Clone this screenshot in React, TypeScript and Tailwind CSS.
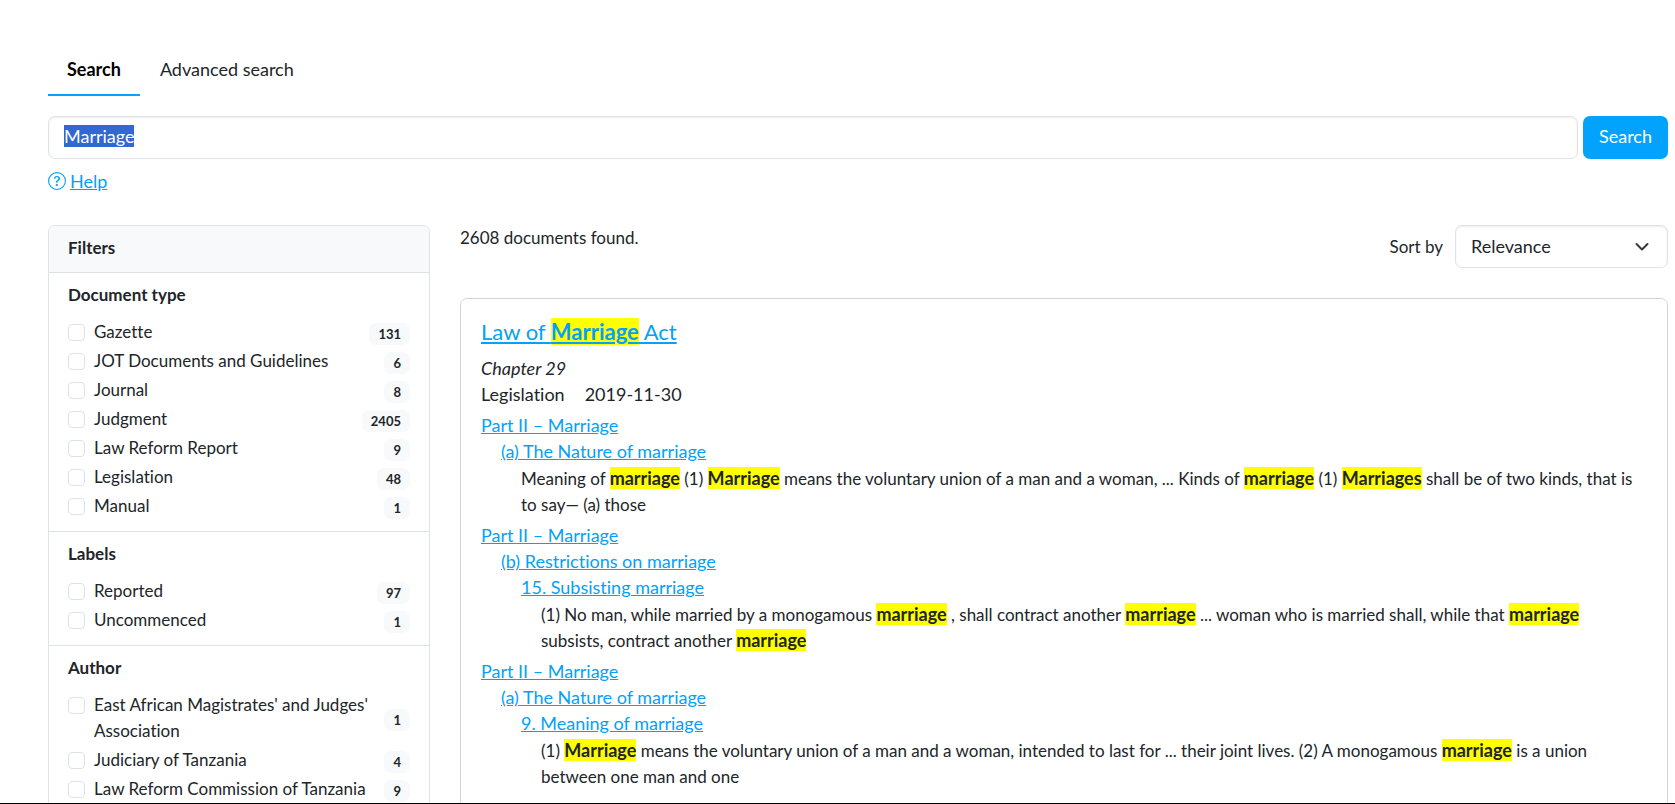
import { useEffect, useRef, type ReactNode } from "react";
import { BsQuestionCircle } from "react-icons/bs";

type Facet = { label: string; count: number };

const facets: { title: string; items: Facet[] }[] = [
  {
    title: "Document type",
    items: [
      { label: "Gazette", count: 131 },
      { label: "JOT Documents and Guidelines", count: 6 },
      { label: "Journal", count: 8 },
      { label: "Judgment", count: 2405 },
      { label: "Law Reform Report", count: 9 },
      { label: "Legislation", count: 48 },
      { label: "Manual", count: 1 },
    ],
  },
  {
    title: "Labels",
    items: [
      { label: "Reported", count: 97 },
      { label: "Uncommenced", count: 1 },
    ],
  },
  {
    title: "Author",
    items: [
      { label: "East African Magistrates' and Judges' Association", count: 1 },
      { label: "Judiciary of Tanzania", count: 4 },
      { label: "Law Reform Commission of Tanzania", count: 9 },
    ],
  },
];

function Mark({ children }: { children: ReactNode }) {
  return <mark className="bg-[#ffff00] leading-none font-bold text-inherit">{children}</mark>;
}

function Link({ children }: { children: ReactNode }) {
  return (
    <a href="#" className="text-[#03a1fc] underline">
      {children}
    </a>
  );
}

function FacetGroup({ title, items }: { title: string; items: Facet[] }) {
  return (
    <section className="border-t border-[#dee2e6] px-[19px] pt-[9px] pb-[9px]">
      <h2 className="mb-[11px] text-[17px] font-bold">{title}</h2>
      <ul>
        {items.map((item) => (
          <li key={item.label} className="flex items-center justify-between pb-[3px]">
            <label className="flex items-start gap-[9px] text-[17px]">
              <input
                type="checkbox"
                className="mt-[5px] size-[17px] shrink-0 appearance-none rounded-[4px] border border-[#dee2e6] bg-white checked:bg-[#03a3fd]"
              />
              <span>{item.label}</span>
            </label>
            <span className="mt-1 rounded-[7px] bg-[#f8f9fb] px-[9px] text-[13px] leading-[22px] font-bold">
              {item.count}
            </span>
          </li>
        ))}
      </ul>
    </section>
  );
}

function Snippet({ children }: { children: ReactNode }) {
  return <p className="pt-[2px] pr-2 text-[17px] [&_mark]:text-[18px]">{children}</p>;
}

function Hit({ path, children }: { path: string[]; children: ReactNode }) {
  return (
    <div className="mt-1">
      <Link>{path[0]}</Link>
      <div className="pl-5">
        <Link>{path[1]}</Link>
        <div className="pl-5">
          {path[2] ? (
            <>
              <Link>{path[2]}</Link>
              <div className="pl-5">
                <Snippet>{children}</Snippet>
              </div>
            </>
          ) : (
            <Snippet>{children}</Snippet>
          )}
        </div>
      </div>
    </div>
  );
}

export default function App() {
  const query = useRef<HTMLInputElement>(null);

  useEffect(() => {
    query.current?.focus();
    query.current?.select();
  }, []);

  return (
    <div className="h-screen overflow-hidden border-b border-black bg-white pt-12 pr-[7px] pl-12 font-['Lato',sans-serif] text-[18px] leading-[26px] text-[#212529] [font-variant-ligatures:no-common-ligatures]">
      <nav className="flex">
        <a href="#" className="border-b-2 border-[#03a3fd] px-[19px] pt-2 pb-3 font-bold text-black">
          Search
        </a>
        <a href="#" className="px-5 pt-2 pb-3">
          Advanced search
        </a>
      </nav>

      <form className="mt-5 flex gap-[5px]" onSubmit={(e) => e.preventDefault()}>
        <input
          ref={query}
          type="text"
          aria-label="Search"
          defaultValue="Marriage"
          className="h-[43px] min-w-0 flex-1 rounded-[7px] border border-[#dee2e6] px-[15px] pb-[3px] leading-[26px] shadow-[inset_0_1px_2px_rgba(0,0,0,0.075)] outline-none selection:bg-[#3367d1] selection:text-white"
        />
        <button type="submit" className="h-[43px] rounded-[7px] bg-[#03a3fd] px-4 pb-[3px] text-white">
          Search
        </button>
      </form>

      <div className="mt-[9px] flex">
        <a href="#" className="flex items-center gap-1 text-[#03a1fc]">
          <BsQuestionCircle className="size-[18px]" />
          <span className="underline">Help</span>
        </a>
      </div>

      <div className="mt-[31px] grid grid-cols-[minmax(0,382fr)_minmax(0,1208fr)] items-start gap-[30px]">
        <aside className="overflow-hidden rounded-[7px] border border-[#dee2e6]">
          <div className="bg-[#f8f9fb] px-[19px] pt-[9px] pb-[11px] text-[17px] font-bold">Filters</div>
          {facets.map((facet) => (
            <FacetGroup key={facet.title} title={facet.title} items={facet.items} />
          ))}
        </aside>

        <main>
          <div className="flex items-start justify-between">
            <p className="text-[17px]">2608 documents found.</p>
            <div className="flex items-center gap-3">
              <label htmlFor="sort" className="text-[17px]">
                Sort by
              </label>
              <div className="grid items-center">
                <select
                  id="sort"
                  className="col-start-1 row-start-1 h-[43px] w-[213px] appearance-none rounded-[7px] border border-[#dee2e6] bg-white px-[15px] pb-[2px] shadow-[inset_0_1px_2px_rgba(0,0,0,0.075)]"
                >
                  <option>Relevance</option>
                  <option>Date (newest first)</option>
                  <option>Date (oldest first)</option>
                </select>
                <svg
                  viewBox="0 0 16 16"
                  className="pointer-events-none col-start-1 row-start-1 mr-[18px] size-4 justify-self-end"
                  fill="none"
                  stroke="#343a40"
                  strokeWidth="2"
                  strokeLinecap="round"
                  strokeLinejoin="round"
                >
                  <path d="m2.5 5 5.5 5.5L13.500 5" />
                </svg>
              </div>
            </div>
          </div>

          <article className="mt-[30px] rounded-[7px] border border-[#d3d3d3] px-5 pt-[19px] pb-5">
            <h3 className="mb-[9px] text-[22px] leading-[28px]">
              <Link>
                Law of <Mark>Marriage</Mark> Act
              </Link>
            </h3>
            <p className="italic">Chapter 29</p>
            <p className="mb-[5px] flex gap-5">
              <span>Legislation</span>
              <span>2019-11-30</span>
            </p>

            <Hit path={["Part II – Marriage", "(a) The Nature of marriage"]}>
              Meaning of <Mark>marriage</Mark> (1) <Mark>Marriage</Mark> means the voluntary union of a man and a
              woman, ... Kinds of <Mark>marriage</Mark> (1) <Mark>Marriages</Mark> shall be of two kinds, that is to
              say— (a) those
            </Hit>
            <Hit path={["Part II – Marriage", "(b) Restrictions on marriage", "15. Subsisting marriage"]}>
              (1) No man, while married by a monogamous <Mark>marriage</Mark> , shall contract another{" "}
              <Mark>marriage</Mark> ... woman who is married shall, while that <Mark>marriage</Mark> subsists, contract
              another <Mark>marriage</Mark>
            </Hit>
            <Hit path={["Part II – Marriage", "(a) The Nature of marriage", "9. Meaning of marriage"]}>
              (1) <Mark>Marriage</Mark> means the voluntary union of a man and a woman, intended to last for ... their
              joint lives. (2) A monogamous <Mark>marriage</Mark> is a union between one man and one
            </Hit>
          </article>
        </main>
      </div>
    </div>
  );
}
